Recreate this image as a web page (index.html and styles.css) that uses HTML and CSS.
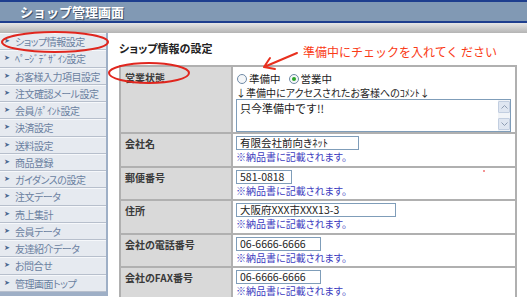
FILE: index.html
```html
<!DOCTYPE html>
<html lang="ja">
<head>
<meta charset="UTF-8">
<title>ショップ管理画面</title>
<link rel="stylesheet" href="styles.css">
</head>
<body>

<div class="admin-header">
  <h1>ショップ管理画面</h1>
</div>
<div class="header-bar"></div>

<div class="admin-body">
  <ul class="side-menu">
    <li>ショップ情報設定</li>
    <li>ﾍﾟｰｼﾞﾃﾞｻﾞｲﾝ設定</li>
    <li>お客様入力項目設定</li>
    <li>注文確認メール設定</li>
    <li>会員/ﾎﾟｲﾝﾄ設定</li>
    <li>決済設定</li>
    <li>送料設定</li>
    <li>商品登録</li>
    <li>ガイダンスの設定</li>
    <li>注文データ</li>
    <li>売上集計</li>
    <li>会員データ</li>
    <li>友達紹介データ</li>
    <li>お問合せ</li>
    <li>管理画面トップ</li>
  </ul>

  <div class="main-area">
    <h2>ショップ情報の設定</h2>
    <table class="setting-table">
      <tr class="row-status">
        <th>営業状態</th>
        <td>
          <div class="radio-line">
            <span class="radio"></span><span class="radio-label">準備中</span>
            <span class="radio checked"></span><span class="radio-label">営業中</span>
          </div>
          <div class="comment-note">↓準備中にアクセスされたお客様へのｺﾒﾝﾄ↓</div>
          <div class="text-box">
            <div class="text-box-body">只今準備中です!!</div>
            <div class="scroll-bar">
              <span class="scroll-btn">
                <svg width="7" height="4" viewBox="0 0 7 4"><path d="M0.5 3.5 L3.5 0.5 L6.5 3.5" fill="none" stroke="#8e9db3" stroke-width="1"/></svg>
              </span>
              <span class="scroll-btn">
                <svg width="7" height="4" viewBox="0 0 7 4"><path d="M0.5 0.5 L3.5 3.5 L6.5 0.5" fill="none" stroke="#8e9db3" stroke-width="1"/></svg>
              </span>
            </div>
          </div>
        </td>
      </tr>
      <tr>
        <th>会社名</th>
        <td>
          <div class="field w-company">有限会社前向きﾈｯﾄ</div>
          <div class="field-note">※納品書に記載されます。</div>
        </td>
      </tr>
      <tr>
        <th>郵便番号</th>
        <td>
          <div class="field w-zip">581-0818</div>
          <div class="field-note">※納品書に記載されます。</div>
        </td>
      </tr>
      <tr>
        <th>住所</th>
        <td>
          <div class="field w-address">大阪府XXX市XXX13-3</div>
          <div class="field-note">※納品書に記載されます。</div>
        </td>
      </tr>
      <tr>
        <th>会社の電話番号</th>
        <td>
          <div class="field w-tel">06-6666-6666</div>
          <div class="field-note">※納品書に記載されます。</div>
        </td>
      </tr>
      <tr>
        <th>会社のFAX番号</th>
        <td>
          <div class="field w-tel">06-6666-6666</div>
          <div class="field-note">※納品書に記載されます。</div>
        </td>
      </tr>
    </table>
  </div>
</div>

<!-- red hand-drawn annotations on top of the screenshot -->
<svg class="notes" width="527" height="297" viewBox="0 0 527 297">
  <ellipse cx="55" cy="42" rx="53" ry="10" fill="none" stroke="#e0261e" stroke-width="2"/>
  <ellipse cx="149" cy="73" rx="40" ry="10" fill="none" stroke="#e0261e" stroke-width="2"/>
  <path d="M297 53 L264 67 M264 67 L275 69 M264 67 L270 58" fill="none" stroke="#e8301e" stroke-width="2" stroke-linecap="round"/>
  <circle cx="484" cy="171" r="1" fill="#f07070"/>
</svg>
<div class="note-text">準備中にチェックを入れてく ださい</div>

</body>
</html>
```

FILE: styles.css
```css
body {
  margin: 0;
  width: 527px;
  height: 297px;
  overflow: hidden;
  position: relative;
  background-color: #fff;
  font-family: "Noto Sans CJK JP", "Noto Sans", sans-serif;
  font-feature-settings: "palt";
  color: #333;
}
.admin-header {
  background-color: #8199b4;
  border-top: 2px solid #1e3e8e;
  border-bottom: 2px solid #1e3e8e;
  height: 19px;
  padding-left: 20px;
}
.admin-header h1 {
  margin: 0;
  font-size: 13px;
  line-height: 19px;
  font-weight: bold;
  color: #fff;
  font-feature-settings: normal;
  text-shadow: 1px 1px 0 #42526a;
}
.header-bar {
  height: 10px;
  background: linear-gradient(#e6e6e6, #b4b4b4);
}
.admin-body {
  display: flex;
  align-items: flex-start;
}
.side-menu {
  list-style: none;
  margin: 0;
  padding: 0;
  width: 106px;
  border-right: 2px solid #9eafc6;
  border-bottom: 4px solid #9eafc6;
  background-color: #e6eaf0;
  flex-shrink: 0;
}
.side-menu li {
  height: 17.25px;
  box-sizing: border-box;
  border-bottom: 1px solid #b7bfcc;
  border-top: 1px solid #f6f8fb;
  padding-left: 15px;
  position: relative;
  font-size: 10px;
  line-height: 15px;
  letter-spacing: -0.5px;
  color: #6a7fa0;
  white-space: nowrap;
}
.side-menu li::before {
  content: "➤";
  position: absolute;
  left: 4px;
  top: 0;
  font-family: "DejaVu Sans", sans-serif;
  font-size: 7px;
  color: #4b6890;
}
.main-area {
  flex: 1;
  padding: 9px 10px 0 11px;
}
.main-area h2 {
  margin: 0 0 10px;
  font-size: 11px;
  line-height: 13px;
  font-weight: bold;
  color: #222;
}
.setting-table {
  width: 398px;
  border-collapse: collapse;
  border: 2px solid #a8a8a8;
}
.setting-table th, .setting-table td {
  border: 2px solid #b0b0b0;
  vertical-align: top;
  text-align: left;
}
.setting-table th {
  width: 106px;
  background-color: #d9d9d9;
  padding: 3px 4px 0;
  font-size: 10px;
  line-height: 13px;
  font-weight: bold;
  color: #3a3a3a;
}
.setting-table td {
  padding: 2px 4px 2.5px 3px;
}
.row-status th {
  padding-top: 4px;
}
.row-status td {
  padding-top: 5px;
  padding-bottom: 0;
}
.radio-line {
  display: flex;
  align-items: center;
  height: 13px;
  font-size: 10.5px;
  line-height: 13px;
  color: #222;
}
.radio {
  width: 8px;
  height: 8px;
  border: 1px solid #6f8aa6;
  border-radius: 50%;
  background-color: #f4f6f8;
  margin: 0 2px 0 1px;
  position: relative;
}
.radio.checked::after {
  content: "";
  position: absolute;
  left: 2px;
  top: 2px;
  width: 4px;
  height: 4px;
  border-radius: 50%;
  background-color: #2aa52a;
}
.radio-label {
  margin-right: 7px;
}
.comment-note {
  font-size: 10px;
  line-height: 13px;
  margin-top: 1px;
  color: #222;
}
.text-box {
  display: flex;
  width: 275px;
  height: 33px;
  box-sizing: border-box;
  border: 1px solid #7f9db9;
}
.text-box-body {
  flex: 1;
  padding: 2px 3px;
  font-size: 11px;
  line-height: 13px;
  font-feature-settings: normal;
  color: #222;
}
.scroll-bar {
  width: 12px;
  background-color: #f1f4f8;
  display: flex;
  flex-direction: column;
  justify-content: space-between;
  padding: 1px 0;
}
.scroll-btn {
  height: 12px;
  background-color: #dfe6f1;
  border: 1px solid #c2cee0;
  border-radius: 1px;
  box-sizing: border-box;
  display: flex;
  align-items: center;
  justify-content: center;
}
.field {
  height: 14px;
  box-sizing: border-box;
  border: 1px solid #7f9db9;
  padding: 0 3px;
  font-size: 10.5px;
  line-height: 12px;
  color: #222;
  white-space: nowrap;
}
.w-company { width: 123px; }
.w-zip { width: 56px; }
.w-address { width: 160px; }
.w-tel { width: 85px; }
.field-note {
  font-size: 10px;
  line-height: 12px;
  margin-top: 1px;
  color: #3c3cc0;
}
.notes {
  position: absolute;
  left: 0;
  top: 0;
  pointer-events: none;
}
.note-text {
  position: absolute;
  left: 303px;
  top: 44px;
  font-size: 12px;
  line-height: 16px;
  color: #fa3a16;
  font-feature-settings: normal;
  white-space: nowrap;
}
```
